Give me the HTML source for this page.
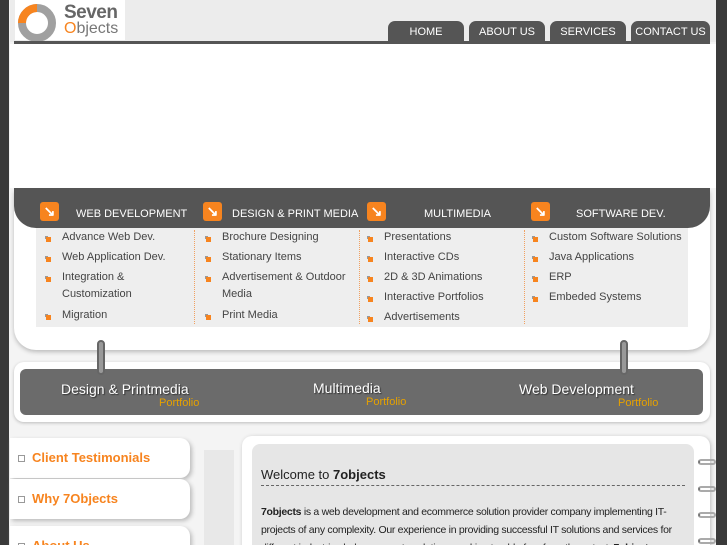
<!DOCTYPE html>
<html style="width:727px;height:545px;overflow:hidden"><head><meta charset="utf-8"><style>
*{margin:0;padding:0;box-sizing:border-box}
body{width:727px;height:545px;overflow:hidden;background:#3a3a3a;font-family:"Liberation Sans",sans-serif;position:relative}
.in{position:absolute;left:9px;top:0;width:707px;height:545px;background:#f4f4f4}
.abs{position:absolute}
.tab{position:absolute;top:21px;height:21px;background:#555;color:#fff;font-size:11px;text-align:center;line-height:22px;border-radius:7px 7px 0 0}
.bar{left:14px;top:188px;width:696px;height:40px;background:#555;border-radius:0 0 22px 22px}
.ar{position:absolute;top:202px;width:19px;height:19px;background:#f7841f;border-radius:3px;color:#fff;font-size:14px;line-height:19px;text-align:center;font-weight:bold}
.ht{position:absolute;top:208px;color:#fff;font-size:11px}
.li{position:absolute;font-size:11px;color:#444;line-height:20px}
.li div{padding-left:20px;position:relative}
.li div:before{content:"";position:absolute;left:4px;top:10px;width:5px;height:5px;background:#f7841f;box-shadow:-2px -2px 0 -1px #999}
.sep{position:absolute;top:230px;height:94px;border-left:1px dotted #f0a060}
.pt{position:absolute;color:#fff;font-size:14px;text-shadow:1px 1px 1px #333}
.po{position:absolute;color:#e6a100;font-size:11px}
.side{position:absolute;left:10px;width:180px;height:40px;background:#fff;border-radius:0 10px 10px 0;box-shadow:2px 2px 4px #bbb;color:#f7841f;font-weight:bold;font-size:13px;line-height:40px;padding-left:22px}
.side:before{content:"";position:absolute;left:8px;top:17px;width:5px;height:5px;border:1px solid #999}
.ring{position:absolute;left:698px;width:18px;height:6px;border:2px solid #aaa;border-radius:3px;border-left-color:#777}
</style></head><body>
<div class="in"></div>
<div class="abs" style="left:10px;top:0;width:706px;height:42px;background:#ececec"></div>
<div class="abs" style="left:15px;top:0;width:110px;height:40px;background:#fff"></div>
<div class="abs" style="left:18px;top:4px;width:38px;height:38px;border:8px solid #a0a0a0;border-radius:50%"></div>
<div class="abs" style="left:18px;top:4px;width:38px;height:38px;border:8px solid transparent;border-left-color:#f7841f;border-radius:50%;transform:rotate(45deg)"></div>
<div class="abs" style="left:64px;top:2px;font-size:19px;font-weight:bold;color:#666;letter-spacing:-0.5px">Seven</div>
<div class="abs" style="left:64px;top:20px;font-size:16px;color:#777"><span style="color:#f7841f">O</span>bjects</div>
<div class="tab" style="left:388px;width:76px">HOME</div>
<div class="tab" style="left:469px;width:76px">ABOUT US</div>
<div class="tab" style="left:550px;width:76px">SERVICES</div>
<div class="tab" style="left:631px;width:79px">CONTACT US</div>
<div class="abs" style="left:14px;top:41px;width:696px;height:3px;background:#555"></div>
<div class="abs" style="left:10px;top:44px;width:706px;height:144px;background:#fff"></div>
<div class="abs" style="left:14px;top:190px;width:696px;height:160px;background:#fff;border-radius:0 0 22px 22px;box-shadow:0 2px 4px #bbb"></div>
<div class="abs bar"></div>
<div class="abs" style="left:36px;top:228px;width:652px;height:99px;background:#eee"></div>
<div class="ar" style="left:40px">↘</div><div class="ht" style="left:76px">WEB DEVELOPMENT</div>
<div class="ar" style="left:203px">↘</div><div class="ht" style="left:232px">DESIGN &amp; PRINT MEDIA</div>
<div class="ar" style="left:367px">↘</div><div class="ht" style="left:424px">MULTIMEDIA</div>
<div class="ar" style="left:531px">↘</div><div class="ht" style="left:576px">SOFTWARE DEV.</div>
<div class="li" style="left:42px;top:227px"><div>Advance Web Dev.</div><div>Web Application Dev.</div><div style="line-height:17px;padding-top:2px;padding-bottom:2px">Integration &amp;<br>Customization</div><div>Migration</div></div>
<div class="li" style="left:202px;top:227px"><div>Brochure Designing</div><div>Stationary Items</div><div style="line-height:17px;padding-top:2px;padding-bottom:2px">Advertisement &amp; Outdoor<br>Media</div><div>Print Media</div></div>
<div class="li" style="left:364px;top:227px"><div>Presentations</div><div>Interactive CDs</div><div>2D &amp; 3D Animations</div><div>Interactive Portfolios</div><div>Advertisements</div></div>
<div class="li" style="left:529px;top:227px"><div>Custom Software Solutions</div><div>Java Applications</div><div>ERP</div><div>Embeded Systems</div></div>
<div class="sep" style="left:194px"></div><div class="sep" style="left:359px"></div><div class="sep" style="left:524px"></div>
<div class="abs" style="left:14px;top:362px;width:696px;height:60px;background:#fff;border-radius:10px;box-shadow:0 1px 3px #bbb"></div>
<div class="abs" style="left:20px;top:369px;width:683px;height:46px;background:#6b6b6b;border-radius:6px"></div>
<div class="abs" style="left:97px;top:340px;width:8px;height:35px;background:#999;border:2px solid #666;border-radius:4px"></div>
<div class="abs" style="left:620px;top:340px;width:8px;height:35px;background:#999;border:2px solid #666;border-radius:4px"></div>
<div class="pt" style="left:61px;top:381px">Design &amp; Printmedia</div><div class="po" style="left:159px;top:397px">Portfolio</div>
<div class="pt" style="left:313px;top:380px">Multimedia</div><div class="po" style="left:366px;top:396px">Portfolio</div>
<div class="pt" style="left:519px;top:381px">Web Development</div><div class="po" style="left:618px;top:397px">Portfolio</div>
<div class="side" style="top:438px">Client Testimonials</div>
<div class="side" style="top:479px">Why 7Objects</div>
<div class="side" style="top:526px">About Us</div>
<div class="abs" style="left:204px;top:450px;width:30px;height:95px;background:#e8e8e8"></div>
<div class="abs" style="left:242px;top:436px;width:468px;height:120px;background:#fff;border-radius:10px;box-shadow:1px 1px 4px #bbb"></div>
<div class="abs" style="left:252px;top:444px;width:442px;height:110px;background:#e6e6e6;border-radius:8px"></div>
<div class="abs" style="left:261px;top:467px;font-size:13px;color:#222">Welcome to <b>7objects</b></div>
<div class="abs" style="left:261px;top:485px;width:424px;border-top:1px dashed #666"></div>
<div class="abs" style="left:261px;top:503px;width:430px;height:42px;overflow:hidden;font-size:10.5px;color:#222;line-height:18px;letter-spacing:-0.3px">
<b>7objects</b> is a web development and ecommerce solution provider company implementing IT-projects of any complexity. Our experience in providing successful IT solutions and services for different industries helps us create solutions working trouble free from the outset. <b>7objects</b></div>
<div class="ring" style="top:459px"></div><div class="ring" style="top:486px"></div><div class="ring" style="top:512px"></div><div class="ring" style="top:538px"></div>
</body></html>
